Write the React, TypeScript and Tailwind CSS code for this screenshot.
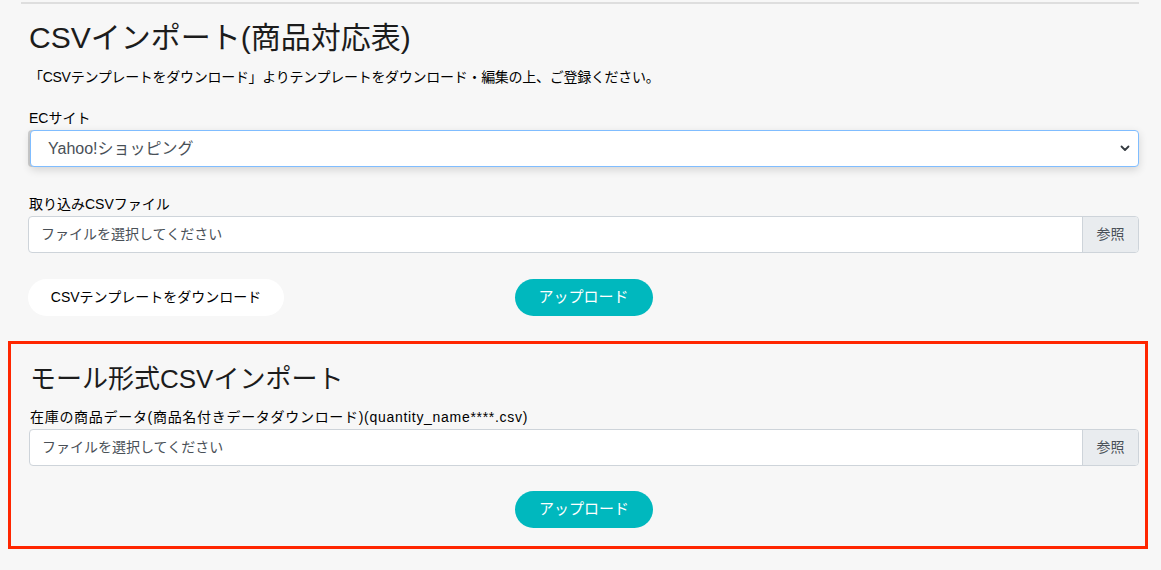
const fontStack = {
  fontFamily: '"Helvetica Neue", "Liberation Sans", "Noto Sans CJK JP", sans-serif',
};

function FileInput() {
  return (
    <div className="flex h-[37px] overflow-hidden rounded-[4px] border border-[#ced4da] bg-white">
      <div className="flex flex-1 items-center pl-[12px] text-[14px] text-[#495057]">
        ファイルを選択してください
      </div>
      <div className="flex w-[56px] items-center justify-center border-l border-[#ced4da] bg-[#e9ecef] text-[14px] text-[#495057]">
        参照
      </div>
    </div>
  );
}

function UploadButton() {
  return (
    <button
      type="button"
      className="h-[37px] w-[138px] rounded-full bg-[#00b8be] text-[15px] text-white"
    >
      アップロード
    </button>
  );
}

export default function App() {
  return (
    <div className="min-h-[570px] bg-[#f7f7f7] pt-[2px] text-[#212529]" style={fontStack}>
      <div className="ml-[21px] mr-[22px] h-[2px] bg-[#dedede]" />

      <div className="ml-[28px] mr-[22px]">
        <h1 className="mt-[16px] pl-px text-[30px] leading-[36px] text-[#1c1c1c]">
          CSVインポート(商品対応表)
        </h1>
        <p className="mt-[11px] pl-px text-[14px] leading-[21px] tracking-[-0.02em] text-black">
          「CSVテンプレートをダウンロード」よりテンプレートをダウンロード・編集の上、ご登録ください。
        </p>

        <label className="mt-[19px] block pl-px text-[14px] leading-[22px] text-black">
          ECサイト
        </label>
        <div className="mt-[1px] ml-[2px] flex h-[37px] items-center justify-between rounded-[4px] border border-[#80bdff] bg-white pl-[17px] pr-[8px] text-[16px] text-[#495057] shadow-[0_3px_8px_rgba(0,0,0,0.14),-2px_0_0_#cfcfcf]">
          <span>Yahoo!ショッピング</span>
          <svg width="10" height="7" viewBox="0 0 10 7" fill="none">
            <path d="M1.5 1.5 L5 5 L8.5 1.5" stroke="#343a40" strokeWidth="1.8" strokeLinecap="round" strokeLinejoin="round" />
          </svg>
        </div>

        <label className="mt-[26px] block pl-px text-[14px] leading-[22px] text-black">
          取り込みCSVファイル
        </label>
        <div className="mt-[1px]">
          <FileInput />
        </div>

        <div className="mt-[26px] grid grid-cols-[1fr_auto_1fr] items-center">
          <div>
            <button
              type="button"
              className="h-[37px] w-[256px] rounded-full bg-white text-[14px] text-black"
            >
              CSVテンプレートをダウンロード
            </button>
          </div>
          <UploadButton />
          <div />
        </div>
      </div>

      <div className="ml-[8px] mr-[13px] mt-[25px] border-[3px] border-[#ff2600] pb-[18px] pl-[18px] pr-[6px] pt-[20px]">
        <h2 className="pl-px text-[26px] leading-[31px] text-[#1c1c1c]">モール形式CSVインポート</h2>
        <label className="mt-[11px] block pl-px text-[14px] leading-[22px] tracking-[0.05em] text-black">
          在庫の商品データ(商品名付きデータダウンロード)(quantity_name****.csv)
        </label>
        <div className="mt-[1px]">
          <FileInput />
        </div>
        <div className="mt-[25px] flex justify-center">
          <UploadButton />
        </div>
      </div>
    </div>
  );
}
